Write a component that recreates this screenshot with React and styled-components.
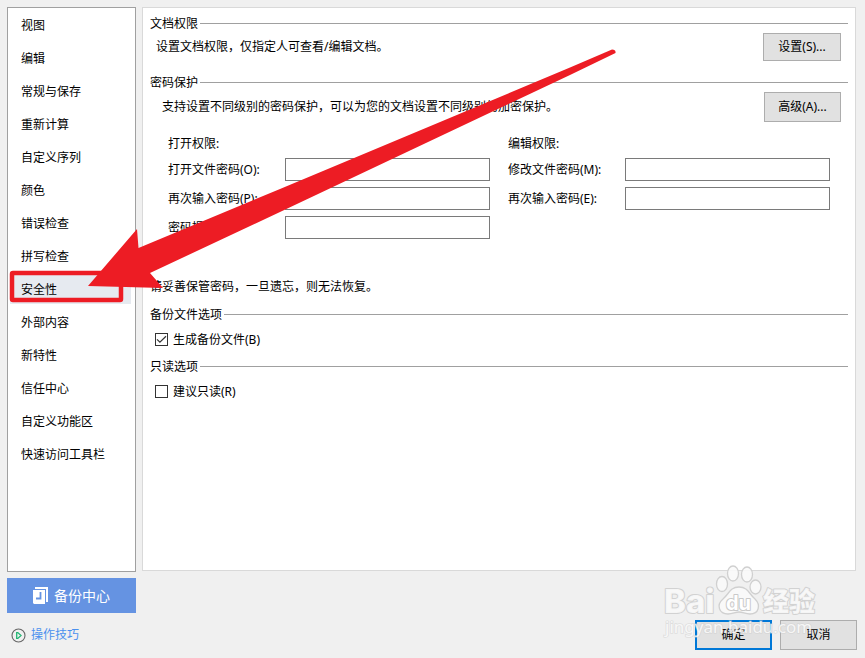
import React, { useState } from "react";
import styled, { createGlobalStyle } from "styled-components";

const GlobalStyle = createGlobalStyle`
  *, *::before, *::after { box-sizing: border-box; }
  body {
    margin: 0;
    background: #f0f0f0;
    color: #000;
    font: 12px/18px "Noto Sans", "Noto Sans CJK SC", sans-serif;
  }
  button, input { font: inherit; color: inherit; }
`;

const Dialog = styled.div`
  position: relative;
  display: grid;
  grid-template-columns: 129px minmax(0, 1fr);
  gap: 6px;
  min-height: 100vh;
  padding: 7px 9px 8px 7px;
  overflow: hidden;
`;

const Column = styled.div`
  display: flex;
  flex-direction: column;
`;

const NavList = styled.nav`
  flex: 1;
  display: flex;
  flex-direction: column;
  gap: 1px;
  padding: 0 4px 0 2px;
  background: #fff;
  border: 1px solid #a0a0a0;
`;

const NavItem = styled.button`
  height: 32px;
  padding: 4px 0 0 11px;
  border: 0;
  text-align: left;
  white-space: nowrap;
  background: ${(p) => (p.$active ? "#e6eaf0" : "transparent")};
`;

const BackupButton = styled.button`
  display: flex;
  align-items: center;
  justify-content: center;
  gap: 6px;
  height: 35px;
  margin-top: 6px;
  padding: 0;
  border: 0;
  background: #6593e2;
  color: #fff;
  font-size: 14px;
`;

const TipsLink = styled.a`
  display: flex;
  align-items: center;
  gap: 5px;
  margin-top: 13px;
  padding: 0 4px 6px;
  color: #4a90ee;
  text-decoration: none;
`;

const Panel = styled.main`
  flex: 1;
  padding: 6px 7px;
  background: #fff;
  border: 1px solid #d9d9d9;
`;

const Section = styled.section`
  margin-bottom: ${(p) => p.$gap || 9}px;
`;

const Heading = styled.h2`
  display: flex;
  align-items: flex-end;
  gap: 2px;
  height: 18px;
  margin: 0;
  font-size: 12px;
  font-weight: 400;
  line-height: 16px;
  white-space: nowrap;

  &::after {
    content: "";
    flex: 1;
    height: 1px;
    margin-bottom: 8px;
    background: #a0a0a0;
  }
`;

const ActionRow = styled.div`
  display: flex;
  align-items: center;
  justify-content: space-between;
  padding: 1px 7px 0 ${(p) => p.$indent}px;
`;

const Text = styled.p`
  margin: 0;
`;

const PushButton = styled.button`
  width: ${(p) => p.$width || 77}px;
  height: ${(p) => p.$height || 30}px;
  padding: 0;
  background: #e1e1e1;
  border: ${(p) => (p.$primary ? "2px solid #0078d7" : "1px solid #adadad")};
`;

const PasswordColumns = styled.div`
  display: flex;
  gap: 18px;
  margin: 13px 0 39px;
  padding-left: 18px;
`;

const PasswordGroup = styled.div`
  display: flex;
  flex-direction: column;
  gap: 6px;
`;

const GroupTitle = styled(Text)`
  height: 17px;
`;

const Field = styled.label`
  display: grid;
  grid-template-columns: 117px 205px;
  align-items: center;
  white-space: nowrap;
`;

const TextBox = styled.input`
  width: 100%;
  height: 23px;
  padding: 0 4px;
  background: #fff;
  border: 1px solid #7a7a7a;
`;

const CheckRow = styled.label`
  display: flex;
  align-items: center;
  gap: 5px;
  width: max-content;
  margin-top: 7px;
  padding-left: 5px;
`;

const CheckLabel = styled.span`
  padding-top: 2px;
  line-height: 16px;
`;

const CheckCell = styled.span`
  display: grid;
  place-items: center;

  & > * { grid-area: 1 / 1; }
  & > svg { pointer-events: none; }
`;

const CheckInput = styled.input`
  appearance: none;
  width: 13px;
  height: 13px;
  margin: 0;
  background: #fff;
  border: 1px solid #333;
`;

const Footer = styled.footer`
  display: flex;
  justify-content: flex-end;
  gap: 8px;
  margin: 49px -1px 0 0;
`;

const Annotation = styled.svg`
  position: absolute;
  top: 0;
  left: 0;
  pointer-events: none;
`;

const Watermark = styled.svg`
  position: absolute;
  right: 40px;
  bottom: 12px;
  pointer-events: none;
`;

const navItems = [
  "视图", "编辑", "常规与保存", "重新计算", "自定义序列", "颜色", "错误检查",
  "拼写检查", "安全性", "外部内容", "新特性", "信任中心", "自定义功能区", "快速访问工具栏",
];

function PasswordField({ label }) {
  return (
    <Field>
      {label}
      <TextBox type="password" />
    </Field>
  );
}

function CheckOption({ label, initial = false }) {
  const [checked, setChecked] = useState(initial);
  return (
    <CheckRow>
      <CheckCell>
        <CheckInput type="checkbox" checked={checked} onChange={(e) => setChecked(e.target.checked)} />
        {checked && (
          <svg width="13" height="13" viewBox="0 0 13 13" fill="none" stroke="#333" strokeWidth="1.2" aria-hidden="true">
            <path d="M2 6.300 4.900 9.200 11 3.200" />
          </svg>
        )}
      </CheckCell>
      <CheckLabel>{label}</CheckLabel>
    </CheckRow>
  );
}

function BackupIcon() {
  return (
    <svg width="15" height="17" viewBox="0 0 15 17" aria-hidden="true">
      <path d="M2 0H15V15H13V2H2Z" fill="#fff" />
      <path d="M0 3H12V17H1L0 16Z" fill="#fff" />
      <path d="M7.500 5V11.500H3" fill="none" stroke="#6593e2" strokeWidth="1.8" />
    </svg>
  );
}

function PlayIcon() {
  return (
    <svg width="15" height="15" viewBox="0 0 15 15" fill="none" aria-hidden="true">
      <circle cx="7.5" cy="7.5" r="6.5" stroke="#666" strokeWidth="1.1" />
      <path d="M5.700 4.600V10.400H6.800L10 7.500 6.800 4.600Z" stroke="#22b573" strokeWidth="1.3" />
    </svg>
  );
}

function SiteWatermark() {
  return (
    <Watermark width="164" height="84" viewBox="0 0 164 84" aria-hidden="true">
      <g fill="#fafafa" fillOpacity="0.85" stroke="#d0d0d0" strokeWidth="1.3">
        <ellipse cx="61" cy="22" rx="5.5" ry="7.5" />
        <ellipse cx="72" cy="11.5" rx="5.5" ry="7.5" />
        <ellipse cx="86" cy="12.5" rx="5.5" ry="7.5" />
        <ellipse cx="94.500" cy="25" rx="5.5" ry="7" />
        <path d="M78 25C69 25 68 32 62 37C55 43 58 52 67 52C72 52 74 50 78 50C82 50 84 52 89 52C98 52 100 43 94 37C88 32 87 25 78 25Z" />
      </g>
      <g fontFamily="Inter, 'Noto Sans CJK SC', sans-serif" fontWeight="800" strokeLinejoin="round" paintOrder="stroke">
        <g fill="#fafafa" fillOpacity="0.9" stroke="#d2d2d2" strokeWidth="2">
          <text x="3" y="51" fontSize="33">Bai</text>
          <text x="102" y="49" fontSize="26">经验</text>
        </g>
        <text x="65" y="48" fontSize="20" fontWeight="700" fill="#fff" stroke="#c9c9c9" strokeWidth="2">du</text>
      </g>
      <text x="4" y="71" fontSize="17" fontFamily="Noto Sans, sans-serif" fill="#fff" fillOpacity="0.8" stroke="#cccccc" strokeOpacity="0.5" strokeWidth="1.6" paintOrder="stroke">
        jingyan.baidu.com
      </text>
    </Watermark>
  );
}

export default function App() {
  const [active, setActive] = useState("安全性");
  return (
    <>
      <GlobalStyle />
      <Dialog>
        <Column>
          <NavList>
            {navItems.map((name) => (
              <NavItem key={name} type="button" $active={name === active} onClick={() => setActive(name)}>
                {name}
              </NavItem>
            ))}
          </NavList>
          <BackupButton type="button">
            <BackupIcon />
            备份中心
          </BackupButton>
          <TipsLink href="#tips">
            <PlayIcon />
            操作技巧
          </TipsLink>
        </Column>

        <Column>
          <Panel>
            <Section $gap={12}>
              <Heading>文档权限</Heading>
              <ActionRow $indent={6}>
                <Text>设置文档权限，仅指定人可查看/编辑文档。</Text>
                <PushButton type="button" $width={78} $height={28}>设置(S)...</PushButton>
              </ActionRow>
            </Section>

            <Section>
              <Heading>密码保护</Heading>
              <ActionRow $indent={12}>
                <Text>支持设置不同级别的密码保护，可以为您的文档设置不同级别的加密保护。</Text>
                <PushButton type="button">高级(A)...</PushButton>
              </ActionRow>
              <PasswordColumns>
                <PasswordGroup>
                  <GroupTitle>打开权限:</GroupTitle>
                  <PasswordField label="打开文件密码(O):" />
                  <PasswordField label="再次输入密码(P):" />
                  <PasswordField label="密码提示(H):" />
                </PasswordGroup>
                <PasswordGroup>
                  <GroupTitle>编辑权限:</GroupTitle>
                  <PasswordField label="修改文件密码(M):" />
                  <PasswordField label="再次输入密码(E):" />
                </PasswordGroup>
              </PasswordColumns>
              <Text>请妥善保管密码，一旦遗忘，则无法恢复。</Text>
            </Section>

            <Section>
              <Heading>备份文件选项</Heading>
              <CheckOption label="生成备份文件(B)" initial />
            </Section>

            <Section>
              <Heading>只读选项</Heading>
              <CheckOption label="建议只读(R)" />
            </Section>
          </Panel>
          <Footer>
            <PushButton type="button" $primary>确定</PushButton>
            <PushButton type="button">取消</PushButton>
          </Footer>
        </Column>

        <Annotation width="620" height="310" viewBox="0 0 620 310" aria-hidden="true">
          <rect x="12" y="273" width="109" height="27" rx="1" fill="none" stroke="#ed1c24" strokeWidth="4.5" />
          <path
            d="M88 286 137 229 138.500 248 280 189 570 67.500 612 49.500Q616 49.500 615.500 53L570 75 280 212 150 273 163 288Z"
            fill="#ed1c24"
          />
        </Annotation>
        <SiteWatermark />
      </Dialog>
    </>
  );
}
